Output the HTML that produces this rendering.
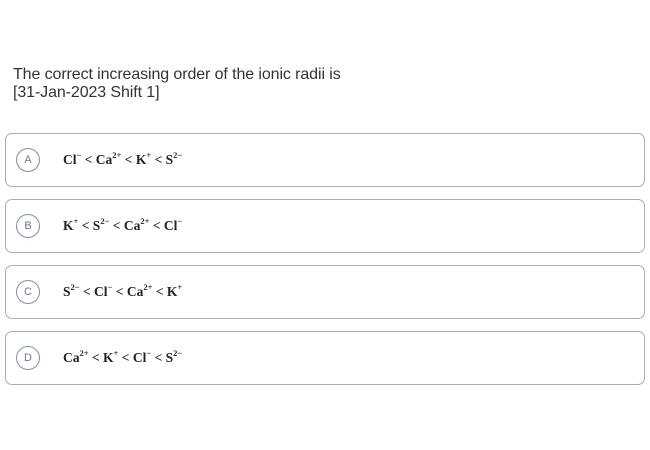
<!DOCTYPE html>
<html><head><style>
body{margin:0;width:650px;height:450px;background:#fff;font-family:"Liberation Sans",sans-serif;position:relative;overflow:hidden}
.q{position:absolute;left:13px;top:66px;font-size:16px;line-height:18px;color:#333;letter-spacing:-0.1px}
.o{position:absolute;left:5px;width:640px;height:54px;border:1px solid #a9aeb3;border-radius:7px;box-sizing:border-box}
.c{position:absolute;left:10px;top:14px;width:24px;height:24px;border:1.3px solid #7c8fa6;border-radius:50%;box-sizing:border-box;font-size:11px;color:#6b7c90;text-align:center;line-height:22px}
.t{position:absolute;left:57px;top:18px;font-family:"Liberation Serif",serif;font-weight:bold;font-size:13.5px;color:#222;white-space:nowrap}
sup{font-size:8.5px;vertical-align:6px;line-height:0}
</style></head><body>
<div class="q">The correct increasing order of the ionic radii is<br>[31-Jan-2023 Shift 1]</div>
<div class="o" style="top:133px"><div class="c">A</div><div class="t">Cl<sup>−</sup> &lt; Ca<sup>2+</sup> &lt; K<sup>+</sup> &lt; S<sup>2−</sup></div></div>
<div class="o" style="top:199px"><div class="c">B</div><div class="t">K<sup>+</sup> &lt; S<sup>2−</sup> &lt; Ca<sup>2+</sup> &lt; Cl<sup>−</sup></div></div>
<div class="o" style="top:265px"><div class="c">C</div><div class="t">S<sup>2−</sup> &lt; Cl<sup>−</sup> &lt; Ca<sup>2+</sup> &lt; K<sup>+</sup></div></div>
<div class="o" style="top:331px"><div class="c">D</div><div class="t">Ca<sup>2+</sup> &lt; K<sup>+</sup> &lt; Cl<sup>−</sup> &lt; S<sup>2−</sup></div></div>
</body></html>
